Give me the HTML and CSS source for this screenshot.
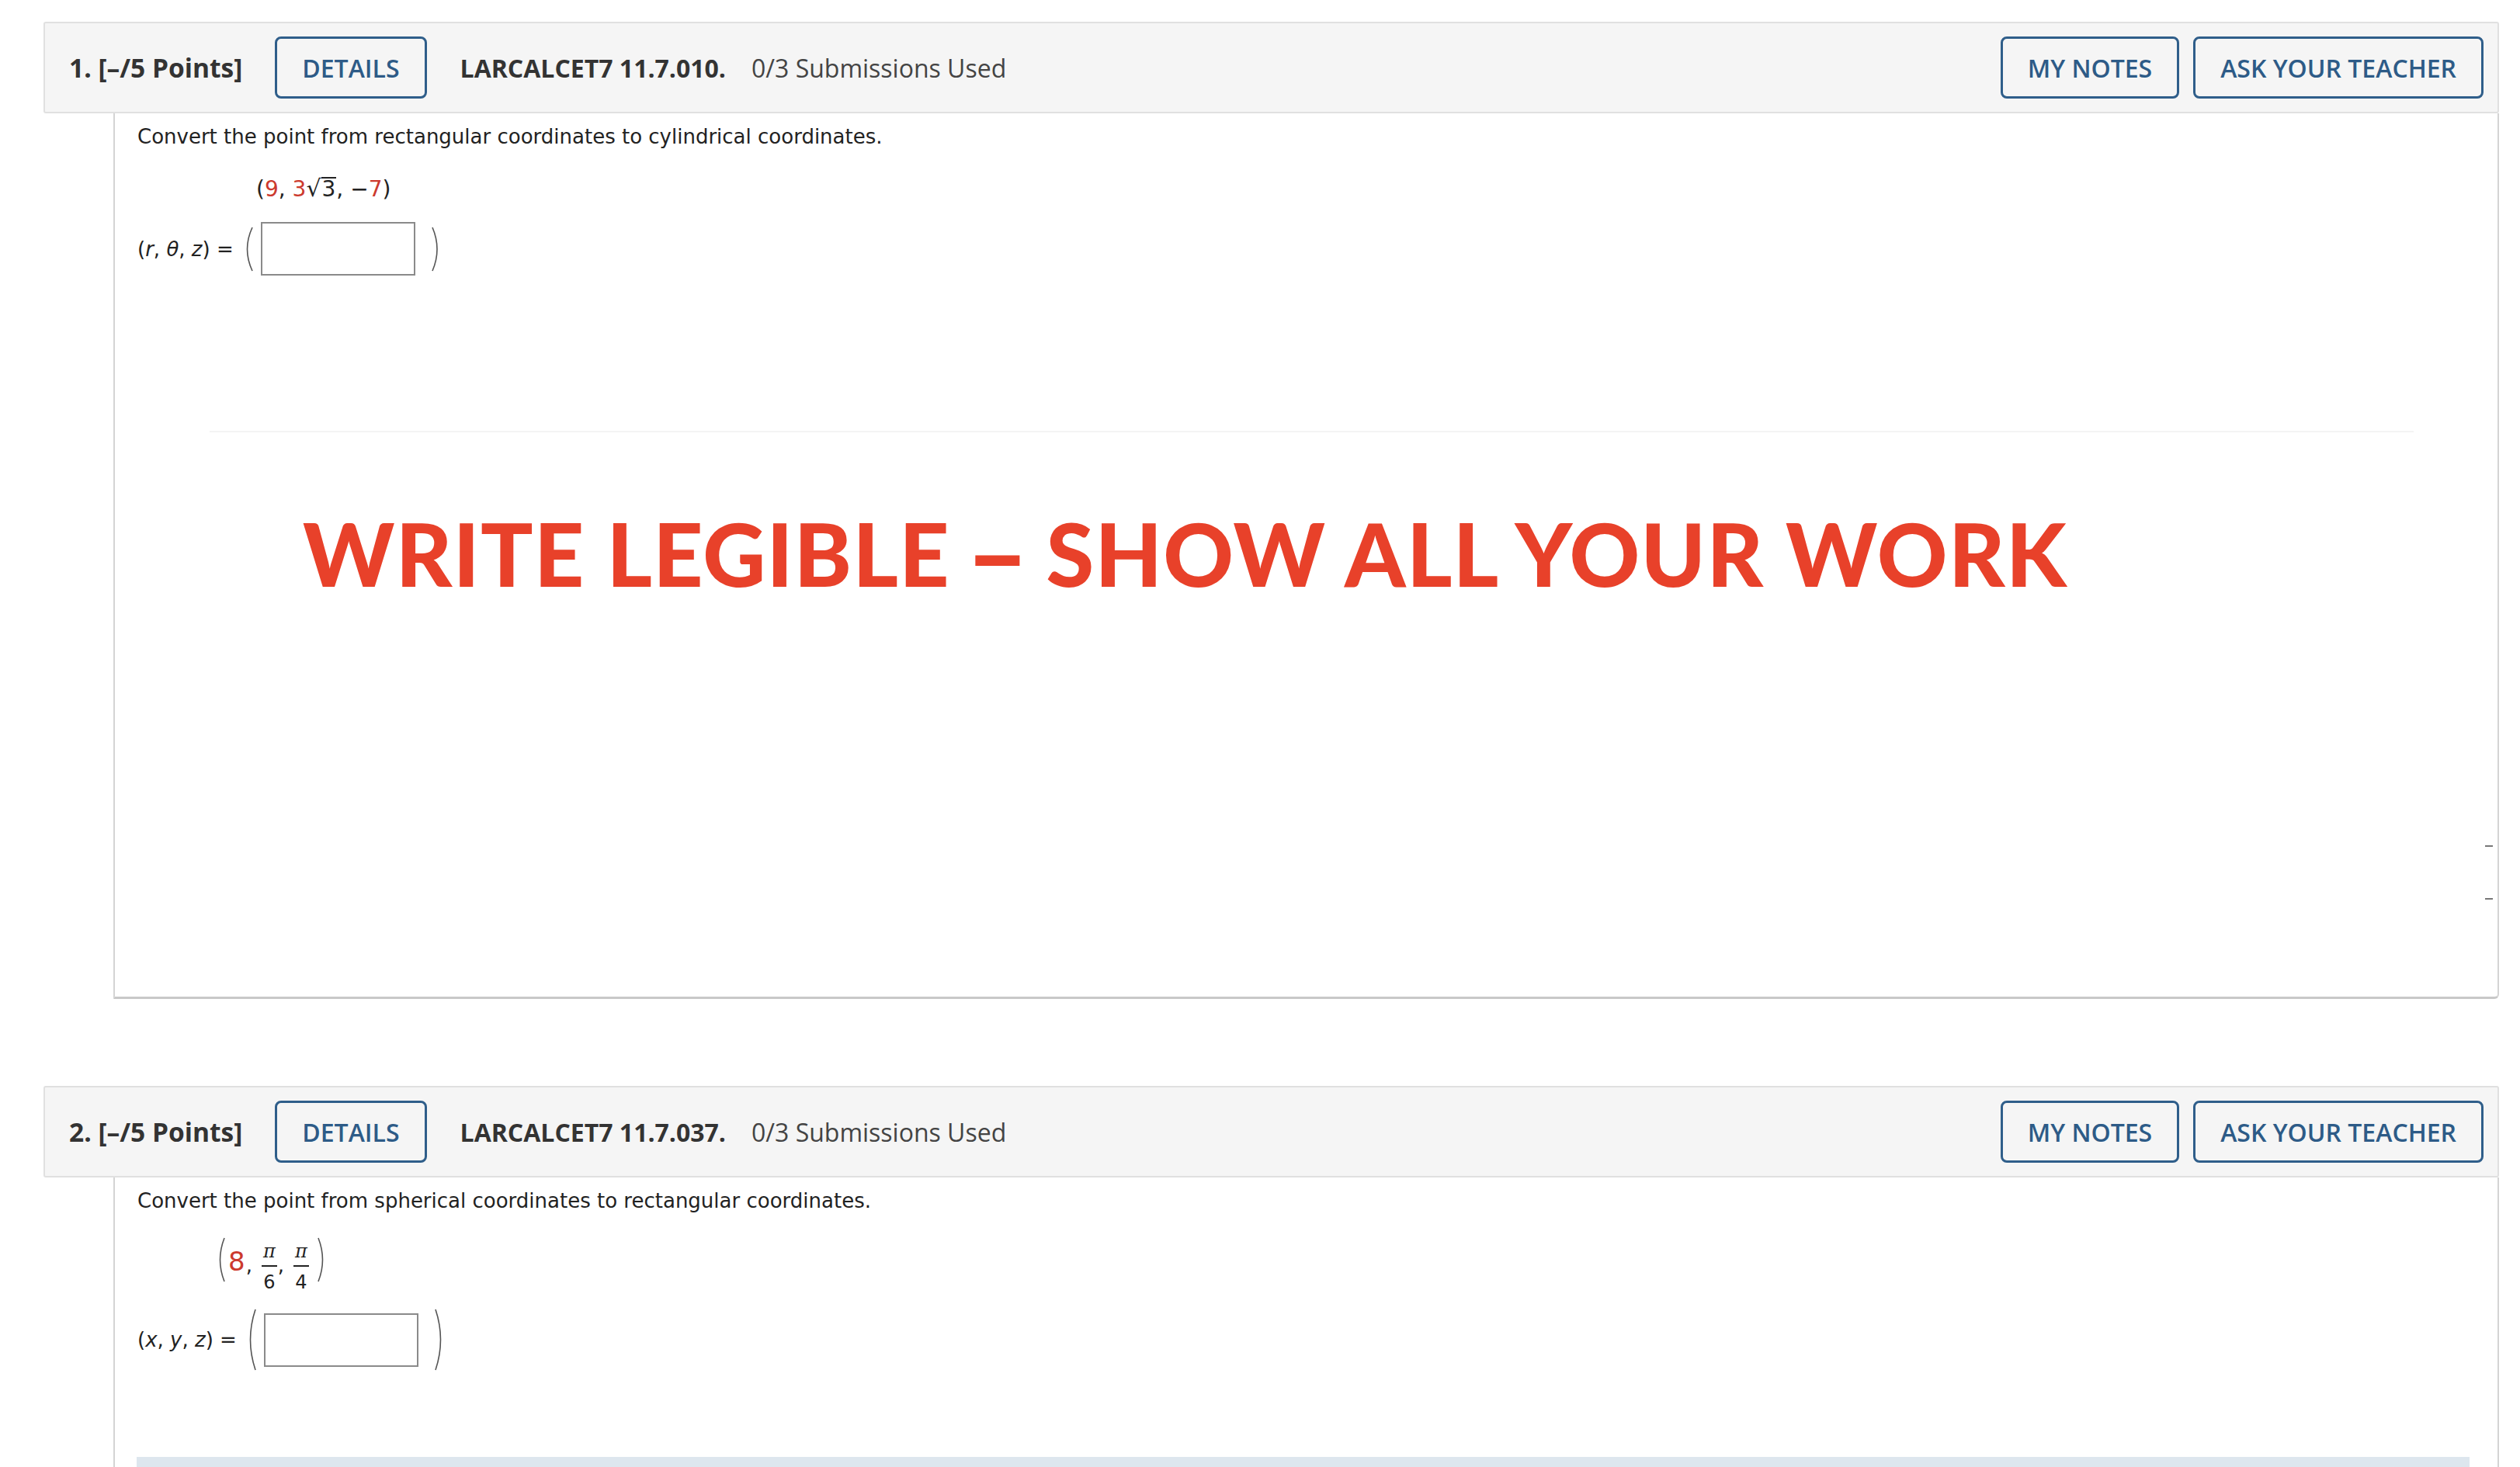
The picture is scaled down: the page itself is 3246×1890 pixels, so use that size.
FILE: index.html
```html
<!DOCTYPE html>
<html lang="en">
<head>
    <meta charset="UTF-8">
    <title>Assignment</title>
    <link rel="stylesheet" href="styles.css">
</head>
<body>
    <div class="page">

        <!-- Question 1 -->
        <div class="question">
            <div class="q-header">
                <span class="q-num">1. [–/5 Points]</span>
                <button class="q-btn details">DETAILS</button>
                <span class="q-code">LARCALCET7 11.7.010.</span>
                <span class="q-subs">0/3 Submissions Used</span>
                <div class="q-actions">
                    <button class="q-btn">MY NOTES</button>
                    <button class="q-btn">ASK YOUR TEACHER</button>
                </div>
            </div>
            <div class="q-body first">
                <p class="prompt">Convert the point from rectangular coordinates to cylindrical coordinates.</p>
                <div class="given">(<span class="red">9</span>, <span class="red">3</span><span class="radical">√</span><span class="radicand">3</span>, −<span class="red">7</span>)</div>
                <div class="answer">
                    <span class="label">(<i>r</i>, <i>θ</i>, <i>z</i>) =</span>
                    <svg class="paren" width="16" height="58" viewBox="0 0 16 58"><path d="M14 1 Q1 29 14 57" fill="none" stroke="#555" stroke-width="1.6"/></svg>
                    <input type="text" class="answer-box">
                    <svg class="paren close" width="14" height="58" viewBox="0 0 14 58"><path d="M2 1 Q14 29 2 57" fill="none" stroke="#555" stroke-width="1.6"/></svg>
                </div>
                <div class="faint-line"></div>
                <div class="shout">WRITE LEGIBLE<span class="dash"> – </span>SHOW ALL YOUR WORK</div>
                <div class="ticks">
                    <span></span>
                    <span></span>
                </div>
            </div>
        </div>

        <!-- Question 2 -->
        <div class="question">
            <div class="q-header">
                <span class="q-num">2. [–/5 Points]</span>
                <button class="q-btn details">DETAILS</button>
                <span class="q-code">LARCALCET7 11.7.037.</span>
                <span class="q-subs">0/3 Submissions Used</span>
                <div class="q-actions">
                    <button class="q-btn">MY NOTES</button>
                    <button class="q-btn">ASK YOUR TEACHER</button>
                </div>
            </div>
            <div class="q-body">
                <p class="prompt">Convert the point from spherical coordinates to rectangular coordinates.</p>
                <div class="given fracs">
                    <svg class="paren" width="13" height="58" viewBox="0 0 13 58"><path d="M11 1 Q0 29 11 57" fill="none" stroke="#555" stroke-width="1.6"/></svg>
                    <span class="red big">8</span><span class="comma">,</span>
                    <span class="frac"><span class="num">π</span><span class="den">6</span></span><span class="comma">,</span>
                    <span class="frac"><span class="num">π</span><span class="den">4</span></span>
                    <svg class="paren" width="13" height="58" viewBox="0 0 13 58"><path d="M2 1 Q13 29 2 57" fill="none" stroke="#555" stroke-width="1.6"/></svg>
                </div>
                <div class="answer">
                    <span class="label">(<i>x</i>, <i>y</i>, <i>z</i>) =</span>
                    <svg class="paren" width="16" height="80" viewBox="0 0 16 80"><path d="M14 1 Q1 40 14 79" fill="none" stroke="#555" stroke-width="1.6"/></svg>
                    <input type="text" class="answer-box">
                    <svg class="paren close" width="16" height="80" viewBox="0 0 16 80"><path d="M2 1 Q15 40 2 79" fill="none" stroke="#555" stroke-width="1.6"/></svg>
                </div>
                <div class="work-bar"></div>
            </div>
        </div>

    </div>
</body>
</html>
```

FILE: styles.css
```css
        body {
            margin: 0;
            padding: 0;
            background-color: #ffffff;
            font-family: "DejaVu Sans", Verdana, sans-serif;
            color: #222;
            overflow: hidden;
        }
        .page {
            padding: 28px 27px 0 56px;
        }
        .question + .question {
            margin-top: 112px;
        }
        /* Header bar */
        .q-header {
            display: flex;
            align-items: center;
            height: 118px;
            box-sizing: border-box;
            padding: 0 18px 0 31px;
            background-color: #f5f5f5;
            border: 2px solid #e0e0e0;
            border-radius: 3px;
            font-family: "Open Sans", sans-serif;
            font-size: 32px;
            color: #333;
        }
        .q-num {
            font-weight: 700;
            font-size: 33.5px;
        }
        .q-code {
            font-weight: 700;
            margin-left: 43px;
        }
        .q-subs {
            margin-left: 33px;
            color: #444;
        }
        .q-actions {
            margin-left: auto;
            display: flex;
            gap: 18px;
        }
        .q-btn {
            height: 80px;
            padding: 0 32px;
            background: transparent;
            border: 3px solid #2f5e8a;
            border-radius: 8px;
            font-family: "Open Sans", sans-serif;
            font-size: 32px;
            font-weight: 600;
            color: #2d5b87;
            cursor: pointer;
        }
        .q-btn.details {
            margin-left: 42px;
        }
        /* Question body */
        .q-body {
            margin-left: 90px;
            padding: 15px 30px 0 29px;
            border-left: 2px solid #d4d4d4;
            border-right: 2px solid #d4d4d4;
            box-sizing: border-box;
        }
        .q-body.first {
            height: 1141px;
            border-bottom: 3px solid #c8c8c8;
            border-bottom-right-radius: 6px;
        }
        .prompt {
            margin: 0;
            font-size: 26px;
            line-height: 30px;
        }
        .given {
            margin-top: 34px;
            padding-left: 153px;
            font-size: 28px;
            line-height: 36px;
        }
        .red {
            color: #cc3a2e;
        }
        .radical {
            font-size: 30px;
        }
        .radicand {
            border-top: 2px solid #222;
            padding: 0 1px;
            line-height: 28px;
            display: inline-block;
        }
        .fracs {
            display: flex;
            align-items: center;
            margin-top: 20px;
            padding-left: 91px;
            line-height: 1;
        }
        .fracs .big {
            font-size: 34px;
            margin-left: 3px;
            margin-top: 4px;
        }
        .fracs .comma {
            font-size: 26px;
            margin: 14px 12px 0 1px;
        }
        .frac {
            display: inline-flex;
            flex-direction: column;
            align-items: center;
            margin-top: 18px;
            font-size: 24px;
        }
        .frac .num {
            font-family: "DejaVu Serif", serif;
            font-style: italic;
            padding: 0 2px 6px;
            border-bottom: 2px solid #222;
        }
        .frac .den {
            padding-top: 8px;
        }
        .answer {
            display: flex;
            align-items: center;
            margin-top: 24px;
            font-size: 26px;
        }
        .fracs + .answer {
            margin-top: 22px;
        }
        .label {
            white-space: nowrap;
        }
        .paren {
            margin-left: 10px;
        }
        .paren.close {
            margin-left: 20px;
        }
        .answer-box {
            width: 199px;
            height: 69px;
            box-sizing: border-box;
            margin-left: 9px;
            border: 2px solid #8a8a8a;
            background: #fff;
        }
        .faint-line {
            height: 2px;
            margin: 200px 78px 0 93px;
            background-color: #f4f4f4;
        }
        .shout {
            margin: 100px 0 0 213px;
            font-family: Lato, sans-serif;
            font-weight: 900;
            font-size: 112px;
            line-height: 1;
            letter-spacing: 1.3px;
            color: #e8412a;
            white-space: pre;
        }
        /* wider dash with tighter spaces around it */
        .shout .dash {
            font-size: 140px;
            line-height: 0;
            vertical-align: -8px;
            word-spacing: -14px;
        }
        .ticks {
            display: flex;
            flex-direction: column;
            align-items: flex-end;
            gap: 66px;
            margin: 320px -24px 0 0;
        }
        .ticks span {
            width: 10px;
            height: 2px;
            background-color: #777;
        }
        .work-bar {
            height: 14px;
            margin: 111px 6px 0 -1px;
            background-color: #dde6ee;
        }
```
